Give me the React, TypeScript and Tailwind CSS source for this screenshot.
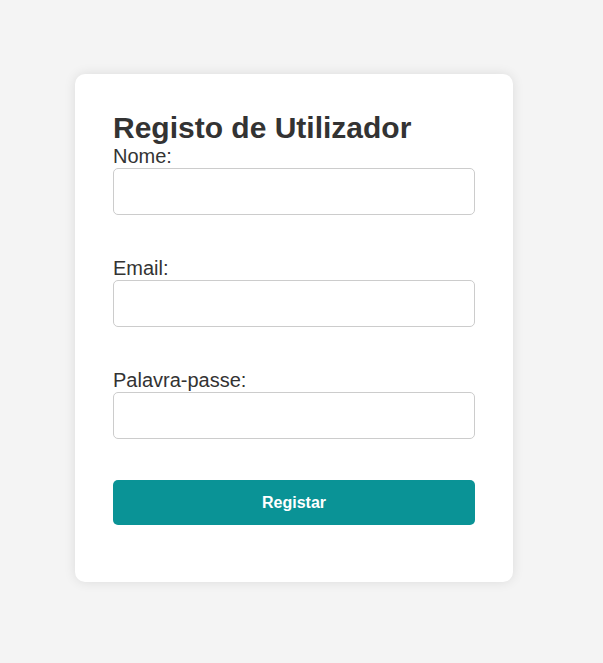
export default function App() {
  return (
    <div className="min-h-[663px] w-full bg-[#f4f4f4] pt-[74px] pl-[75px] font-['Liberation_Sans',Arial,sans-serif] text-[#333]">
      <div className="w-[438px] rounded-[10px] bg-white px-[38px] pt-[37px] pb-[57px] shadow-[0_0_12px_rgba(0,0,0,0.1)]">
        <h2 className="text-[30px] font-bold leading-[33px]">Registo de Utilizador</h2>

        <form className="flex flex-col" onSubmit={(e) => e.preventDefault()}>
          <label className="text-[20px] leading-[24px]">Nome:</label>
          <input
            type="text"
            className="h-[47px] w-full rounded-[5px] border border-[#ccc] px-3 outline-none"
          />

          <label className="mt-[41px] text-[20px] leading-[24px]">Email:</label>
          <input
            type="email"
            className="h-[47px] w-full rounded-[5px] border border-[#ccc] px-3 outline-none"
          />

          <label className="mt-[41px] text-[20px] leading-[24px]">Palavra-passe:</label>
          <input
            type="password"
            className="h-[47px] w-full rounded-[5px] border border-[#ccc] px-3 outline-none"
          />

          <button
            type="submit"
            className="mt-[41px] h-[45px] w-full rounded-[5px] bg-[#0a9396] text-[16px] font-bold text-white"
          >
            Registar
          </button>
        </form>
      </div>
    </div>
  );
}
